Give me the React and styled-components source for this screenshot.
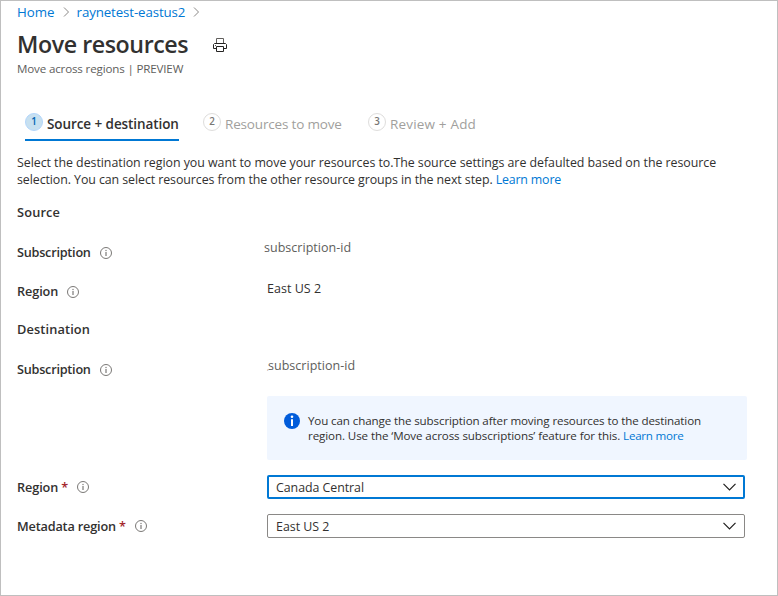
import React from 'react';
import styled, { createGlobalStyle } from 'styled-components';

const GlobalStyle = createGlobalStyle`
  *, *::before, *::after { box-sizing: border-box; }
  body { margin: 0; background: #fff; color: #323130; font-family: "Open Sans", "Noto Sans", sans-serif; }
`;

const Page = styled.main`
  width: 778px;
  height: 596px;
  border: 1px solid #bfbfbf;
  padding: 0 16px;
  background: #fff;
  display: flex;
  flex-direction: column;
  overflow: hidden;
`;

const Tracked = styled.span`
  letter-spacing: ${({ $track }) => $track || 0}px;
  white-space: pre;
`;

const Link = styled.a`
  color: #0078d4;
  text-decoration: none;
  white-space: pre;
  letter-spacing: ${({ $track }) => $track || 0}px;
`;

const Breadcrumb = styled.nav`
  height: 23px;
  flex: none;
  display: flex;
  align-items: center;
  font-size: 13.3px;
  line-height: 20px;
  padding-bottom: 2px;

  svg { margin: 1px 7px 0 8px; }
`;

const TitleBar = styled.header`
  height: 37px;
  flex: none;
  display: flex;
  align-items: center;
  gap: 25px;
  padding-top: 2px;

  svg { margin-top: 2px; }
`;

const Title = styled.h1`
  margin: 0;
  width: 171px;
  font-size: 23.2px;
  line-height: 34px;
  font-weight: 600;
  letter-spacing: -0.42px;
  white-space: nowrap;
`;

const Subtitle = styled.p`
  margin: 0;
  height: 16px;
  flex: none;
  font-size: 11.6px;
  line-height: 16px;
  color: #605e5c;
`;

const Steps = styled.nav`
  display: flex;
  flex: none;
  gap: 24px;
  height: 34px;
  margin: 32px 0 0 8px;
`;

const Step = styled.div`
  display: flex;
  gap: 4px;
  height: 32px;
  font-size: 13.5px;
  line-height: 31px;
  font-weight: ${({ $active }) => ($active ? 600 : 400)};
  color: ${({ $active }) => ($active ? '#323130' : '#a19f9d')};
  border-bottom: 2px solid ${({ $active }) => ($active ? '#0078d4' : 'transparent')};
  width: ${({ $width }) => $width}px;
`;

const StepNumber = styled.span`
  width: 18px;
  height: 18px;
  flex: none;
  margin-top: 4px;
  border-radius: 50%;
  display: flex;
  align-items: center;
  justify-content: center;
  font-size: 9.8px;
  line-height: 16px;
  font-weight: 600;
  color: ${({ $active }) => ($active ? '#0065b3' : '#797775')};
  background: ${({ $active }) => ($active ? '#c7e0f0' : '#fff')};
  border: 1px solid ${({ $active }) => ($active ? '#b3d6fb' : '#dedddc')};
`;

const Intro = styled.p`
  margin: 11px 0 0;
  height: 38px;
  flex: none;
  font-size: 12.4px;
  line-height: 17px;
`;

const Line = styled.span`
  display: block;
  white-space: nowrap;
`;

const Row = styled.div`
  display: grid;
  grid-template-columns: 250px 478px;
  align-items: center;
  height: ${({ $height }) => $height}px;
  flex: none;
`;

const SectionTitle = styled.h2`
  margin: 0;
  font-size: 12.8px;
  line-height: 18px;
  font-weight: 600;
  letter-spacing: ${({ $track }) => $track || 0}px;
`;

const Label = styled.div`
  display: flex;
  align-items: center;
  font-size: 12.7px;
  line-height: 18px;
  font-weight: 600;

  svg { margin: 1px 0 0 9px; }
`;

const Required = styled.span`
  color: #a4262c;
  margin-left: 3px;
`;

const Value = styled.div`
  font-size: 12.5px;
  line-height: 18px;
  letter-spacing: 0.03px;
  white-space: nowrap;
  color: ${({ $muted }) => ($muted ? '#605e5c' : '#323130')};
  margin-left: ${({ $indent }) => $indent || 0}px;
  padding-bottom: ${({ $lift }) => $lift || 0}px;
`;

const Mark = styled.span`
  display: inline-block;
  width: 2px;
  margin-right: -1px;
  font-size: 7px;
  line-height: 1;
  color: #8a8886;
`;

const InfoBox = styled.aside`
  display: flex;
  gap: 8px;
  flex: none;
  width: 480px;
  height: 64px;
  margin: 6px 0 7px 250px;
  padding: 17px 17px 0;
  border-radius: 2px;
  background: #f0f6ff;
  font-size: 11.6px;
  line-height: 15px;
`;

const Select = styled.div`
  display: flex;
  align-items: center;
  justify-content: space-between;
  width: 478px;
  height: 24px;
  border: ${({ $focused }) => ($focused ? '2px solid #0078d4' : '1px solid #8a8886')};
  border-radius: 2px;
  padding: ${({ $focused }) => ($focused ? '2px 7px 0 7px' : '2px 8px 0 8px')};
  font-size: 12.4px;
  line-height: 18px;

  svg { margin-bottom: 1px; }
`;

const InfoIcon = () => (
  <svg width="12" height="12" viewBox="0 0 12 12" fill="none">
    <circle cx="6" cy="6" r="5.5" stroke="#6b6967" strokeWidth="0.9" />
    <path d="M6 5v4M6 2.9v1.2" stroke="#605e5c" strokeWidth="1" />
  </svg>
);

const InfoBadge = () => (
  <svg width="16" height="16" viewBox="0 0 16 16" fill="none">
    <circle cx="8" cy="8" r="8" fill="#015cda" />
    <circle cx="8" cy="3.8" r="1.3" fill="#fff" />
    <path d="M8 6.2V13" stroke="#fff" strokeWidth="2" />
  </svg>
);

const Separator = () => (
  <svg width="7" height="10" viewBox="0 0 7 10" fill="none">
    <path d="M1 .5 5.5 5 1 9.5" stroke="#8a8886" />
  </svg>
);

const Chevron = () => (
  <svg width="13" height="8" viewBox="0 0 13 8" fill="none">
    <path d="M.5.8 6.5 6.8 12.5.8" stroke="#201f1e" strokeWidth="1.2" />
  </svg>
);

const Printer = () => (
  <svg width="14" height="14" viewBox="0 0 14 14" fill="none" stroke="#252423">
    <path d="M3.5 5V.5h7V5" stroke="#605e5c" />
    <path d="M3.5 10.5h-3v-4l1-1h11l1 1v4h-3" />
    <path d="M3.5 8.5h7v5h-7z" />
    <path d="M2 7.5h1" strokeWidth=".8" />
  </svg>
);

const steps = [
  { label: 'Source + destination', width: 154, active: true, track: -0.08 },
  { label: 'Resources to move', width: 141, track: -0.17 },
  { label: 'Review + Add', width: 110, track: 0.18 },
];

export default function App() {
  return (
    <>
      <GlobalStyle />
      <Page>
        <Breadcrumb>
          <Link href="#">Home</Link>
          <Separator />
          <Link href="#" $track={-0.12}>raynetest-eastus2</Link>
          <Separator />
        </Breadcrumb>
        <TitleBar>
          <Title>Move resources</Title>
          <Printer />
        </TitleBar>
        <Subtitle><Tracked $track={-0.16}>Move across regions | PREVIEW</Tracked></Subtitle>
        <Steps>
          {steps.map((step, i) => (
            <Step key={step.label} $active={step.active} $width={step.width}>
              <StepNumber $active={step.active}>{i + 1}</StepNumber>
              <Tracked $track={step.track}>{step.label}</Tracked>
            </Step>
          ))}
        </Steps>
        <Intro>
          <Line><Tracked $track={-0.045}>Select the destination region you want to move your resources to.The source settings are defaulted based on the resource</Tracked></Line>
          <Line>
            <Tracked $track={-0.08}>selection. You can select resources from the other resource groups in the next step. </Tracked>
            <Link href="#" $track={-0.18}>Learn more</Link>
          </Line>
        </Intro>
        <Row $height={40}><SectionTitle $track={0.15}>Source</SectionTitle></Row>
        <Row $height={40}>
          <Label><Tracked $track={-0.25}>Subscription</Tracked><InfoIcon /></Label>
          <Value $muted $indent={-3} $lift={9}>subscription-id</Value>
        </Row>
        <Row $height={38}>
          <Label><Tracked $track={-0.1}>Region</Tracked><InfoIcon /></Label>
          <Value $lift={5}>East US 2</Value>
        </Row>
        <Row $height={38}><SectionTitle $track={0.12}>Destination</SectionTitle></Row>
        <Row $height={42}>
          <Label><Tracked $track={-0.25}>Subscription</Tracked><InfoIcon /></Label>
          <Value $muted $lift={7}><Mark>,</Mark>subscription-id</Value>
        </Row>
        <InfoBox>
          <InfoBadge />
          <div>
            <Line><Tracked $track={-0.12}>You can change the subscription after moving resources to the destination</Tracked></Line>
            <Line>
              <Tracked $track={-0.1}>region. Use the ‘Move across subscriptions’ feature for this. </Tracked>
              <Link href="#" $track={-0.25}>Learn more</Link>
            </Line>
          </div>
        </InfoBox>
        <Row $height={39}>
          <Label><Tracked $track={-0.1}>Region</Tracked><Required>*</Required><InfoIcon /></Label>
          <Select $focused><Tracked $track={-0.05}>Canada Central</Tracked><Chevron /></Select>
        </Row>
        <Row $height={39}>
          <Label><Tracked $track={-0.17}>Metadata region</Tracked><Required>*</Required><InfoIcon /></Label>
          <Select>East US 2<Chevron /></Select>
        </Row>
      </Page>
    </>
  );
}
